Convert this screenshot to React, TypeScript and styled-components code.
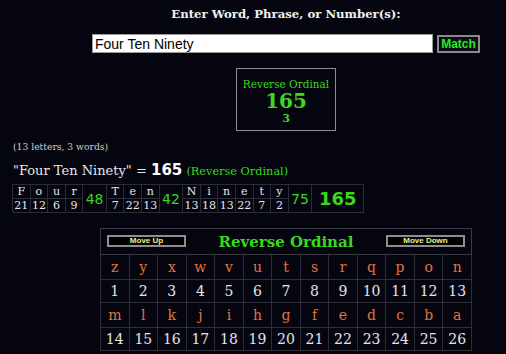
import React from "react";
import styled, { createGlobalStyle } from "styled-components";

const GREEN = "#3ad81e";
const ORANGE = "#e0743c";
const LIGHT = "#e6e6ea";

const Global = createGlobalStyle`
  html, body { margin: 0; padding: 0; background: #05050f; }
  body { font-family: "DejaVu Serif", serif; color: ${LIGHT}; }
`;

const Page = styled.div`
  width: 506px;
  height: 354px;
  overflow: hidden;
  display: flex;
  flex-direction: column;
  align-items: flex-start;
`;

const Center = styled.div`
  margin-left: 66px;
  width: 440px;
  display: flex;
  flex-direction: column;
  align-items: center;
`;

const Heading = styled.div`
  margin-top: 5px;
  font-family: "DejaVu Serif", serif;
  font-weight: bold;
  font-size: 11.7px;
  color: #f0f0f0;
  height: 20px;
  line-height: 18px;
`;

const SearchRow = styled.div`
  margin-top: 9px;
  display: flex;
  align-items: center;
  gap: 4px;
`;

const Input = styled.input`
  box-sizing: border-box;
  width: 341px;
  height: 19px;
  border: 1px solid #9a9a9a;
  padding: 0 2px;
  font-family: "Liberation Sans", Arial, sans-serif;
  font-size: 14px;
  color: #000;
  background: #fff;
  outline: none;
`;

const MatchButton = styled.button`
  box-sizing: border-box;
  width: 43px;
  height: 18px;
  padding: 0;
  background: #0c0c12;
  border: 2px solid #8a8a8a;
  font-family: "Liberation Sans", Arial, sans-serif;
  font-weight: bold;
  font-size: 12px;
  color: #22ee22;
  line-height: 14px;
`;

const ResultBox = styled.div`
  margin-top: 15px;
  box-sizing: border-box;
  width: 100px;
  height: 63px;
  border: 1px solid #8c8c8c;
  display: flex;
  flex-direction: column;
  align-items: center;
  color: ${GREEN};
`;

const BoxLabel = styled.div`
  margin-top: 9px;
  font-size: 10.5px;
  line-height: 12px;
`;

const BoxValue = styled.div`
  font-weight: bold;
  font-size: 20px;
  line-height: 22px;
`;

const BoxCount = styled.div`
  font-weight: bold;
  font-size: 11px;
  line-height: 13px;
`;

const Info = styled.div`
  margin: 9px 0 0 13px;
  font-size: 9.2px;
  line-height: 14px;
  color: #cfcfc0;
`;

const Summary = styled.div`
  margin: 6px 0 0 13px;
  font-size: 13px;
  line-height: 20px;
  color: ${LIGHT};
  white-space: nowrap;
`;

const SumValue = styled.span`
  font-family: "DejaVu Sans", sans-serif;
  font-weight: bold;
  font-size: 15px;
  color: #fff;
`;

const SumCipher = styled.span`
  font-size: 11.3px;
  color: ${GREEN};
`;

const Breakdown = styled.table`
  margin: 2px 0 0 12px;
  width: 351px;
  table-layout: fixed;
  border-collapse: collapse;
  border: 1px solid #2c2c36;
`;

const Col = styled.col<{ $w: number }>`
  width: ${(p) => p.$w}px;
`;

const Cell = styled.td`
  border: 1px solid #2c2c36;
  padding: 0;
  height: 13px;
  text-align: center;
  font-size: 11px;
  line-height: 13px;
  color: ${LIGHT};
  white-space: nowrap;
`;

const WordSum = styled.td`
  border: 1px solid #2c2c36;
  padding: 0;
  text-align: center;
  font-family: "DejaVu Sans", sans-serif;
  font-size: 14px;
  color: ${GREEN};
`;

const Total = styled.td`
  border: 1px solid #2c2c36;
  padding: 0;
  text-align: center;
  font-family: "DejaVu Sans", sans-serif;
  font-weight: bold;
  font-size: 18px;
  color: ${GREEN};
`;

const CipherWrap = styled.div`
  margin: 15px 0 0 100px;
`;

const Cipher = styled.table`
  width: 372px;
  table-layout: fixed;
  border-collapse: collapse;
  border: 1px solid #3a3a44;
`;

const HeaderCell = styled.td`
  border: 1px solid #3a3a44;
  padding: 0;
  height: 25px;
`;

const HeaderBar = styled.div`
  display: flex;
  align-items: center;
  justify-content: space-between;
  padding: 0 6px;
`;

const MoveButton = styled.button`
  box-sizing: border-box;
  width: 79px;
  height: 12px;
  padding: 0;
  background: #000;
  border: 2px solid #8e8e8e;
  font-family: "Liberation Sans", Arial, sans-serif;
  font-weight: bold;
  font-size: 8px;
  line-height: 8px;
  color: #f0f08a;
  align-self: flex-start;
  margin-top: 3px;
`;

const CipherTitle = styled.div`
  font-weight: bold;
  font-size: 15px;
  line-height: 20px;
  color: ${GREEN};
`;

const GridCell = styled.td<{ $letter?: boolean }>`
  border: 1px solid #2e2e38;
  padding: 0;
  height: ${(p) => (p.$letter ? 24 : 22)}px;
  text-align: center;
  font-size: 14px;
  color: ${(p) => (p.$letter ? ORANGE : LIGHT)};
`;

const words = ["Four", "Ten", "Ninety"];
const ro = (c: string) => 27 - (c.toLowerCase().charCodeAt(0) - 96);

export default function App() {
  const alpha = "zyxwvutsrqponmlkjihgfedcba".split("");
  const rows = [alpha.slice(0, 13), alpha.slice(13)];
  const cols: number[] = [];
  words.forEach((w) => {
    w.split("").forEach(() => cols.push(17.6));
    cols.push(23.5);
  });
  cols.push(52);
  return (
    <Page>
      <Global />
      <Center>
        <Heading>Enter Word, Phrase, or Number(s):</Heading>
        <SearchRow>
          <Input defaultValue="Four Ten Ninety" />
          <MatchButton>Match</MatchButton>
        </SearchRow>
        <ResultBox>
          <BoxLabel>Reverse Ordinal</BoxLabel>
          <BoxValue>165</BoxValue>
          <BoxCount>3</BoxCount>
        </ResultBox>
      </Center>
      <Info>(13 letters, 3 words)</Info>
      <Summary>
        "Four Ten Ninety" = <SumValue>165</SumValue> <SumCipher>(Reverse Ordinal)</SumCipher>
      </Summary>
      <Breakdown>
        <colgroup>
          {cols.map((w, i) => (
            <Col key={i} $w={w} />
          ))}
        </colgroup>
        <tbody>
          <tr>
            {words.map((w) => (
              <React.Fragment key={w}>
                {w.split("").map((c, i) => (
                  <Cell key={i}>{c}</Cell>
                ))}
                <WordSum rowSpan={2}>
                  {w.split("").reduce((s, c) => s + ro(c), 0)}
                </WordSum>
              </React.Fragment>
            ))}
            <Total rowSpan={2}>165</Total>
          </tr>
          <tr>
            {words.map((w) =>
              w.split("").map((c, i) => <Cell key={w + i}>{ro(c)}</Cell>)
            )}
          </tr>
        </tbody>
      </Breakdown>
      <CipherWrap>
        <Cipher>
          <tbody>
            <tr>
              <HeaderCell colSpan={13}>
                <HeaderBar>
                  <MoveButton>Move Up</MoveButton>
                  <CipherTitle>Reverse Ordinal</CipherTitle>
                  <MoveButton>Move Down</MoveButton>
                </HeaderBar>
              </HeaderCell>
            </tr>
            {rows.map((r, ri) => (
              <React.Fragment key={ri}>
                <tr>
                  {r.map((c) => (
                    <GridCell key={c} $letter>
                      {c}
                    </GridCell>
                  ))}
                </tr>
                <tr>
                  {r.map((c, i) => (
                    <GridCell key={c}>{ri * 13 + i + 1}</GridCell>
                  ))}
                </tr>
              </React.Fragment>
            ))}
          </tbody>
        </Cipher>
      </CipherWrap>
    </Page>
  );
}
